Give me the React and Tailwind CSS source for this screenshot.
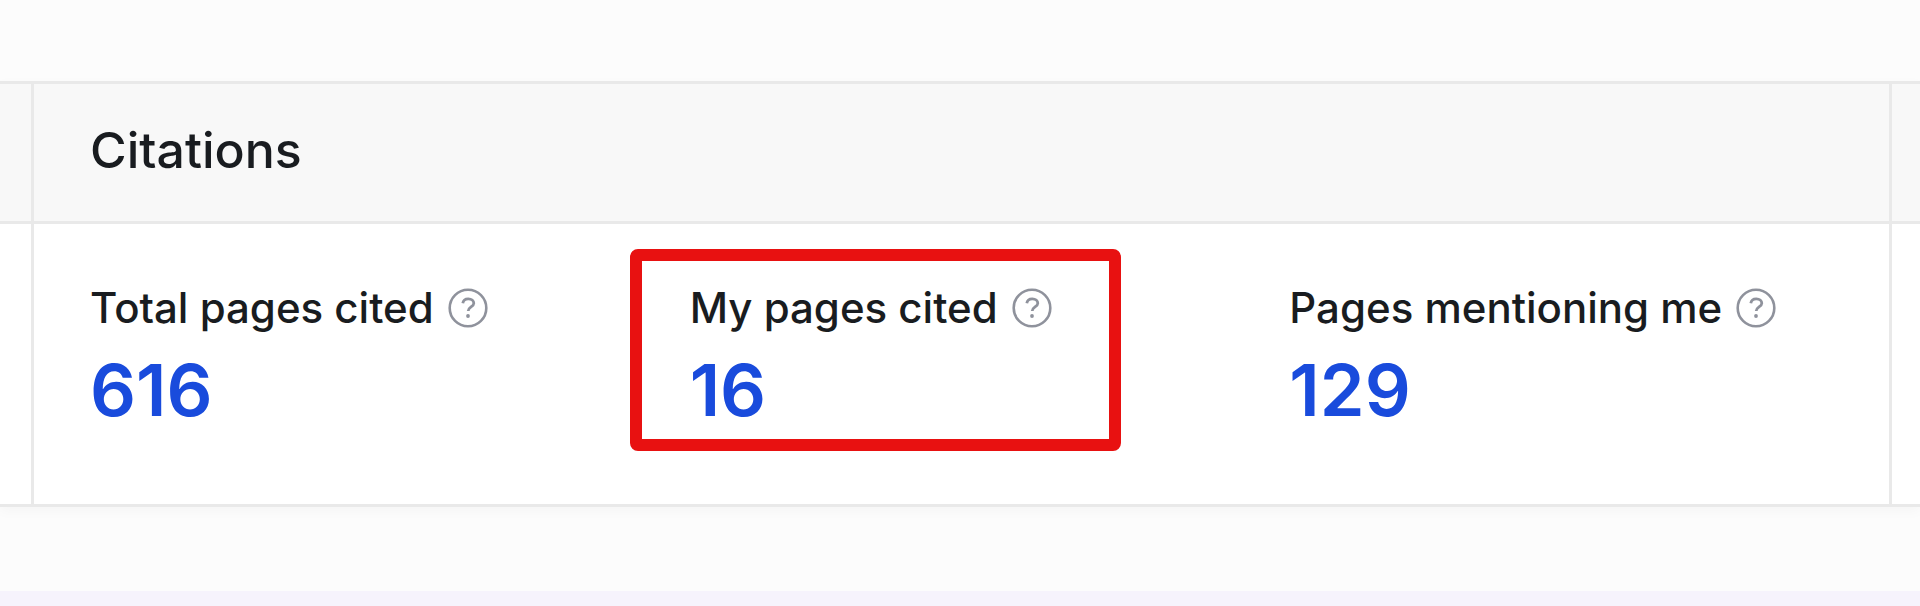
import React from 'react';

const stats = [
  { id: 'total', label: 'Total pages cited', value: 616 },
  { id: 'mine', label: 'My pages cited', value: 16, highlighted: true },
  { id: 'mentions', label: 'Pages mentioning me', value: 129 },
];

const HelpIcon = () => (
  <svg viewBox="0 0 40 40" fill="none" stroke="#8f929c" className="size-10" aria-hidden="true">
    <circle cx="20" cy="20" r="18.3" strokeWidth="2.6" />
    <path d="M14.800 15.200c.4-2.800 2.500-4.400 5.500-4.400 3.200 0 5.500 1.800 5.500 4.400 0 3.600-5.600 4-5.600 7.800" strokeWidth="2.800" />
    <circle cx="20" cy="28" r="1.900" fill="#8f929c" stroke="none" />
  </svg>
);

const Stat = ({ label, value, highlighted }) => (
  <div className="relative flex flex-col gap-3">
    {highlighted && (
      <div className="absolute -left-[60px] right-[168px] -top-[33px] -bottom-[17px] border-12 border-[#e81111] rounded-lg pointer-events-none"></div>
    )}
    <div className="flex items-center gap-3.5">
      <span className="text-[42px] leading-[52px] font-medium whitespace-nowrap">{label}</span>
      <button type="button" aria-label={`About ${label}`} className="shrink-0">
        <HelpIcon />
      </button>
    </div>
    <a href="#citations" className="block w-fit text-[72px] leading-[88px] font-semibold text-[#194bdc]">
      {value}
    </a>
  </div>
);

// Edge of a neighbouring group in the same row
const SideGroup = ({ className }) => (
  <div className={`shrink-0 flex flex-col ${className}`}>
    <div className="h-[140px] bg-[#f8f8f8] border-b-3 border-[#e9e9e9]"></div>
    <div className="flex-1 bg-white"></div>
  </div>
);

const App = () => {
  return (
    <div className="min-h-screen flex flex-col bg-[#fcfcfc] font-['Inter',sans-serif] text-[#191c20]">
      <main className="flex-1 pt-[81px] pb-[84px]">
        <div className="flex border-y-3 border-[#e9e9e9] shadow-[0_4px_12px_rgba(0,0,0,0.03)]">
          <SideGroup className="w-[31px]" />
          <section className="flex-1 min-w-0 border-x-3 border-[#e9e9e9]">
            <header className="h-[140px] flex items-center pl-14 pb-1.5 bg-[#f8f8f8] border-b-3 border-[#e9e9e9]">
              <h2 className="text-[50px] leading-[60px] font-medium">Citations</h2>
            </header>
            <div className="grid grid-cols-3 pl-14 pt-[58px] pb-[70px] bg-white">
              {stats.map((stat) => (
                <Stat key={stat.id} {...stat} />
              ))}
            </div>
          </section>
          <SideGroup className="w-[28px]" />
        </div>
      </main>
      <div className="h-[15px] bg-[#f6f3fc]"></div>
    </div>
  );
};

export default App;
